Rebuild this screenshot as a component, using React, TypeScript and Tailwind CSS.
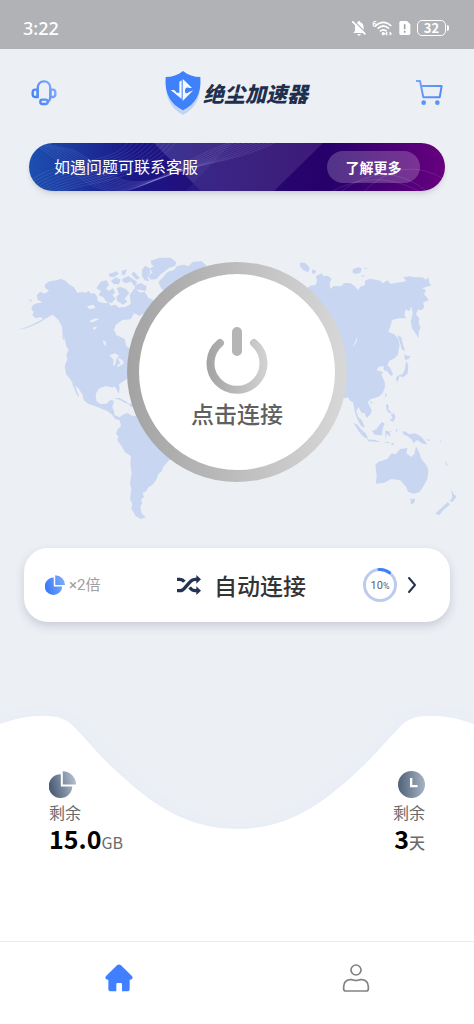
function ShieldLogo() {
  return (
    <svg className="h-11 w-[38px]" viewBox="0 0 114 132" aria-hidden="true">
      <path d="M57 12 C72 24 90 30 108 30 C112 80 94 112 57 132 C20 112 2 80 6 30 C24 30 42 24 57 12Z" fill="#c3d4f3" />
      <path d="M57 0 C72 12 90 18 109 18 C113 68 94 100 57 118 C20 100 1 68 5 18 C24 18 42 12 57 0Z" fill="#3f80fb" />
      <path
        d="M46 32 L53 28 V84 L20 57 H31 L38 65 H46Z M56 24 L63 30 L84 51 H75 C66 47 63 54 63 60 C63 66 68 70 74 64 L88 58 L56 90Z"
        fill="#f4f8ff"
      />
    </svg>
  )
}

function HeadsetIcon() {
  return (
    <svg className="size-[26px]" viewBox="0 0 78 78" fill="none" stroke="url(#headset)" strokeWidth="7" aria-hidden="true">
      <defs>
        <linearGradient id="headset" gradientUnits="userSpaceOnUse" x1="0" y1="60" x2="78" y2="20">
          <stop stopColor="#3c7cf8" />
          <stop offset="1" stopColor="#86aefa" />
        </linearGradient>
      </defs>
      <path d="M20 50 V25 C20 12 28 4 39 4 C50 4 58 12 58 25 V50" />
      <path d="M20 29 H12 Q5 29 5 37 V43 Q5 51 12 51 H20Z M58 29 H66 Q73 29 73 37 V43 Q73 51 66 51 H58Z" />
      <path d="M58 49 Q58 65 47 66" />
      <rect x="28" y="59" width="22" height="13" rx="6" />
    </svg>
  )
}

function CartIcon() {
  return (
    <svg className="size-7" viewBox="0 0 84 84" fill="none" stroke="url(#cart)" strokeWidth="6" aria-hidden="true">
      <defs>
        <linearGradient id="cart" gradientUnits="userSpaceOnUse" x1="0" y1="0" x2="84" y2="70">
          <stop stopColor="#7aa6fa" />
          <stop offset="1" stopColor="#4a84f7" />
        </linearGradient>
      </defs>
      <path d="M3 6 H15 L25 55 H74 L80 21 H18" strokeLinejoin="round" />
      <circle cx="26" cy="71" r="7" fill="#5e92f8" stroke="none" />
      <circle cx="67" cy="71" r="7" fill="#5e92f8" stroke="none" />
    </svg>
  )
}

function StatusIcons() {
  return (
    <div className="flex items-center gap-1.5 text-white">
      <svg className="h-4 w-3.5" viewBox="0 0 42 48" aria-hidden="true">
        <path d="M21 3 Q25 3 25 7 Q35 11 35 23 V33 L40 39 H4 L9 33 V20 Q10 10 17 7 Q17 3 21 3Z M16 42 H27 Q25 47 21 47 Q17 47 16 42Z" fill="currentColor" />
        <path d="M4 1 L44 41" stroke="#b1b2b6" strokeWidth="4" />
        <path d="M1 4 L40 43" stroke="currentColor" strokeWidth="5" />
      </svg>
      <div className="flex">
        <span className="-mr-1 text-[8px] leading-[8px] font-bold">6</span>
        <svg className="h-4 w-5" viewBox="0 0 60 48" fill="none" stroke="currentColor" strokeWidth="5" aria-hidden="true">
          <path d="M7 18 Q31 -4 55 18 M14 26 Q31 10 48 26 M21 34 Q31 25 41 34" />
          <circle cx="31" cy="41" r="5" fill="currentColor" stroke="none" />
          <path d="M43 37 L39 41 L43 45 M50 37 L54 41 L50 45" strokeWidth="4" />
        </svg>
      </div>
      <svg className="h-4 w-3" viewBox="0 0 36 48" aria-hidden="true">
        <path d="M5 3 H24 L34 13 V40 Q34 45 29 45 H5 Q1 45 1 40 V8 Q1 3 5 3Z" fill="currentColor" />
        <path d="M17 13 V28 M17 32 V38" stroke="#a4a5a9" strokeWidth="5" />
      </svg>
      <div className="flex items-center">
        <span className="flex h-4 w-[29px] items-center justify-center rounded-[5px] border border-white text-[13px] leading-none font-bold">
          32
        </span>
        <span className="ml-px h-1.5 w-0.5 rounded-r bg-white" />
      </div>
    </div>
  )
}

function WorldMap() {
  return (
    <svg className="col-start-1 row-start-1 h-auto w-full" viewBox="0 0 1422 870" fill="#c8d6f2" aria-hidden="true">
      <path d="M50 270 L78 262 L108 248 L130 236 L120 231 L108 235 L97 226 L101 216 L94 208 L98 196 L112 189 L127 188 L112 178 L111 164 L121 155 L134 161 L147 152 L134 142 L135 133 L149 124 L171 121 L182 116 L196 122 L206 132 L222 142 L232 158 L247 156 L258 158 L265 152 L274 161 L283 159 L291 169 L293 184 L312 190 L325 187 L332 197 L347 194 L356 203 L375 201 L389 194 L404 168 L414 160 L426 170 L440 165 L450 190 L420 228 L402 220 L392 238 L367 240 L347 255 L342 269 L349 285 L374 297 L379 318 L391 327 L440 340 L410 405 L380 418 L357 433 L359 446 L356 462 L346 441 L334 442 L318 438 L296 446 L287 463 L289 482 L300 492 L320 491 L331 480 L342 482 L337 502 L342 512 L344 526 L360 532 L370 523 L383 519 L396 527 L411 527 L440 565 L525 655 L507 661 L490 680 L485 694 L475 702 L469 719 L457 735 L445 742 L439 754 L428 758 L432 771 L423 779 L427 790 L421 800 L425 821 L438 832 L423 837 L407 829 L399 814 L394 806 L397 791 L390 778 L394 748 L390 730 L395 700 L391 675 L393 649 L374 635 L366 620 L352 601 L355 589 L348 581 L353 568 L363 559 L359 541 L345 537 L338 526 L323 514 L301 505 L286 499 L266 492 L251 481 L248 464 L235 445 L222 435 L212 419 L198 402 L194 378 L202 359 L199 343 L206 331 L199 318 L194 298 L188 286 L186 260 L175 239 L158 224 L140 234 L112 251 L78 265Z" />
      <path d="M289 145 L302 125 L320 121 L327 135 L318 145 L327 153 L339 144 L345 158 L337 165 L347 176 L334 190 L318 184 L310 172 L296 166 L303 153Z M326 102 L350 94 L357 102 L340 112 L329 110Z M365 92 L381 88 L375 104 L366 105Z M333 122 L348 112 L362 119 L357 133 L341 132Z M367 116 L385 108 L398 117 L412 126 L403 139 L393 124 L380 130 L367 125Z M350 145 L361 140 L377 147 L388 158 L374 176 L382 185 L369 194 L352 183 L349 171 L357 162Z M389 166 L403 145 L421 158 L434 155 L445 173 L460 180 L451 208 L433 222 L415 226 L416 210 L401 205 L406 193 L392 186Z M401 94 L410 104 L420 114 L409 119 L394 103Z M405 136 L422 129 L440 139 L437 153 L419 150 L405 148Z M426 90 L435 77 L448 84 L451 98 L443 109 L447 124 L434 121 L426 109Z M452 62 L480 53 L512 53 L529 67 L525 78 L507 84 L492 96 L480 105 L470 117 L452 119 L444 107 L458 97 L448 86 L462 79 L454 73Z M475 126 L490 111 L503 95 L520 91 L532 78 L549 74 L566 78 L579 65 L605 64 L620 77 L560 105 L560 140 L488 150 L481 140Z" />
      <path d="M86 177 L96 181 L93 186Z M185 287 L193 294 L191 301Z M215 428 L224 434 L230 451 L238 471 L231 465 L223 446Z M341 475 L358 474 L374 482 L389 492 L376 489 L360 480Z M386 493 L400 490 L406 500 L391 500Z" />
      {/* lakes */}
      <path d="M261 199 L280 194 L287 203 L268 208Z M267 244 L285 235 L298 237 L278 247Z M277 264 L292 259 L284 270Z M309 300 L317 305 L318 319 L311 312Z M328 346 L345 340 L358 348 L350 355 L345 375 L339 378 L341 359Z M352 354 L367 359 L372 370 L357 380 L350 378 L361 370Z" fill="#ecf0f5" />
      <g transform="translate(702 0)">
        <path d="M220 145 L229 137 L244 135 L249 124 L246 108 L263 100 L269 108 L281 107 L293 116 L287 130 L289 147 L299 138 L321 139 L331 129 L348 129 L361 137 L373 151 L379 140 L393 135 L393 122 L407 116 L425 119 L439 122 L447 130 L461 121 L469 132 L489 128 L506 126 L517 123 L508 112 L525 109 L545 112 L566 112 L575 119 L583 112 L586 129 L592 136 L574 142 L564 144 L576 151 L570 162 L577 170 L584 180 L567 188 L571 200 L564 210 L552 209 L546 222 L556 237 L554 251 L560 261 L554 278 L554 295 L544 279 L534 265 L530 245 L536 220 L532 199 L526 214 L515 208 L511 225 L516 235 L494 235 L474 240 L470 257 L463 276 L480 282 L492 295 L497 315 L491 346 L478 357 L466 362 L460 376 L468 383 L477 402 L471 409 L459 393 L449 391 L449 378 L434 380 L428 391 L447 396 L442 404 L452 425 L453 441 L446 459 L434 470 L409 478 L401 487 L413 511 L410 523 L398 533 L391 519 L382 518 L374 501 L367 512 L372 530 L383 540 L393 563 L381 558 L370 537 L363 517 L357 487 L348 482 L342 472 L332 475 L250 410Z" />
        <path d="M197 68 L213 68 L221 76 L228 85 L222 97 L208 91 L199 80Z M235 88 L247 93 L241 103 L233 98Z M357 88 L371 82 L383 85 L380 98 L364 102 L355 97Z M389 83 L401 84 L396 88Z M381 104 L395 109 L385 110Z" />
        <path d="M491 285 L502 292 L507 314 L514 333 L504 329 L498 309Z M512 341 L519 348 L530 348 L523 358 L512 359Z M516 363 L523 374 L521 401 L508 411 L496 409 L491 426 L485 418 L490 408 L506 402 L513 387Z M453 460 L459 462 L455 474Z M407 483 L416 486 L412 492Z M456 491 L464 496 L463 509 L474 518 L464 519 L457 507Z M470 523 L481 520 L484 535 L478 545 L466 541 L476 534Z M358 548 L371 555 L381 568 L395 580 L403 597 L390 592 L375 575Z M399 598 L424 600 L440 606 L402 604Z M414 573 L427 568 L436 555 L445 545 L452 551 L447 562 L444 586 L422 584Z M454 571 L466 575 L477 571 L466 578 L471 590 L459 582 L454 596Z M485 566 L491 570 L487 578Z M447 605 L467 606 L463 610Z M471 610 L483 609 L475 616Z M503 574 L516 575 L525 583 L543 580 L562 590 L580 613 L566 611 L549 600 L538 610 L534 600 L521 589 L511 585Z M579 597 L591 600 L582 603Z M617 600 L624 606 L620 607Z M633 663 L642 676 L637 676Z" />
        <path d="M424 674 L434 665 L460 657 L473 640 L485 643 L498 627 L520 624 L517 640 L532 651 L541 642 L546 619 L556 638 L561 655 L577 676 L583 689 L580 716 L570 736 L557 756 L538 761 L522 755 L515 738 L509 733 L499 721 L472 717 L451 728 L425 731 L428 709Z M529 776 L544 777 L540 789 L531 793Z M652 748 L660 764 L668 769 L656 785 L647 784 L655 773Z M641 786 L648 794 L629 809 L615 826 L604 820 L620 806Z" />
        <path d="M366 288 Q370 301 354 320 Q367 312 369 300Z" fill="#ecf0f5" />
      </g>
    </svg>
  )
}

function PieIcon({ from, to, id, className }: { from: string; to: string; id: string; className: string }) {
  return (
    <svg className={className} viewBox="0 0 80 80" fill={`url(#${id})`} aria-hidden="true">
      <defs>
        <linearGradient id={id} gradientUnits="userSpaceOnUse" x1="5" y1="50" x2="80" y2="30">
          <stop stopColor={from} />
          <stop offset="1" stopColor={to} />
        </linearGradient>
      </defs>
      <path d="M35 10 V46 H69 A35 35 0 1 1 35 10Z" />
      <path d="M41 1 A39 39 0 0 1 80 40 H41Z" />
    </svg>
  )
}

function Banner() {
  const waves = [0, 1, 2, 3, 4, 5, 6, 7, 8, 9]

  return (
    <section className="mx-[29px] mt-1.5 grid overflow-hidden rounded-full shadow-md">
      <svg className="col-start-1 row-start-1 h-12 w-full" viewBox="0 0 1248 144" preserveAspectRatio="none" aria-hidden="true">
        <defs>
          <linearGradient id="banner">
            <stop stopColor="#1c50b0" />
            <stop offset="0.25" stopColor="#1b1787" />
            <stop offset="0.5" stopColor="#260a73" />
            <stop offset="0.72" stopColor="#27006a" />
            <stop offset="1" stopColor="#68007f" />
          </linearGradient>
        </defs>
        <rect width="1248" height="144" fill="url(#banner)" />
        <path d="M375 0 H882 L735 144 H515Z" fill="#fff" fillOpacity="0.1" />
        <path d="M610 0 L470 144 H515 L375 0Z" fill="#fff" fillOpacity="0.04" />
        <g fill="none" stroke="#b9bfff" strokeOpacity="0.22" strokeWidth="2">
          {waves.map((n) => (
            <path key={n} d={`M${n * 16 - 20} ${-10 + n * 3} C${90 + n * 16} ${20 + n * 5} ${180 + n * 8} ${190 - n * 4} ${320 + n * 10} ${135 - n * 4} S${500 + n * 12} ${20 + n * 5} ${670 + n * 12} -20`} />
          ))}
          {waves.map((n) => (
            <path key={n} d={`M${n * 14 - 40} 150 C${80 + n * 12} ${20 + n * 10} ${250 + n * 12} ${90 + n * 3} ${310 + n * 16} -20`} />
          ))}
          <path d="M900 150 Q1040 70 1180 150 M930 150 Q1070 40 1200 150 M1000 150 Q1120 30 1248 110" />
        </g>
      </svg>
      <div className="col-start-1 row-start-1 flex items-center justify-between px-[25px]">
        <p className="pb-0.5 text-base text-white">如遇问题可联系客服</p>
        <button className="h-8 w-[93px] rounded-full bg-white/20 text-sm font-bold text-white">了解更多</button>
      </div>
    </section>
  )
}

function ConnectButton() {
  return (
    <button className="col-start-1 row-start-1 mt-[22px] size-[220px] justify-self-center rounded-full bg-linear-to-r from-[#a3a3a3] to-[#d8d8d8] p-3">
      <span className="flex size-full flex-col items-center rounded-full bg-white pt-[52px]">
        <svg className="h-[68px] w-16" viewBox="0 0 64 68" fill="none" strokeLinecap="round" aria-hidden="true">
          <defs>
            <linearGradient id="power" gradientUnits="userSpaceOnUse" x1="2" y1="0" x2="62" y2="0">
              <stop stopColor="#a3a3a3" />
              <stop offset="1" stopColor="#d2d2d2" />
            </linearGradient>
          </defs>
          <path d="M15 17 A26.5 26.5 0 1 0 49 17" stroke="url(#power)" strokeWidth="8" />
          <rect x="27" y="1" width="10" height="29" rx="5" fill="#b5b5b5" />
        </svg>
        <span className="text-[23px] leading-[38px] font-medium text-[#606060]">点击连接</span>
      </span>
    </button>
  )
}

function NodeCard() {
  return (
    <section className="mx-6 mt-[18px] grid h-[74px] grid-cols-[1fr_auto_1fr] items-center rounded-3xl bg-white px-5 shadow-[0_4px_10px_rgba(60,60,90,0.2)]">
      <div className="flex items-center gap-1 pl-px font-['Roboto','Noto_Sans_CJK_SC',sans-serif] text-[15px] text-[#a0a0a0]">
        <PieIcon className="size-5" id="rate" from="#3c7cf8" to="#7fabfc" />
        ×2倍
      </div>
      <div className="flex items-center gap-3 pl-2 text-[23px] font-medium text-[#333]">
        <svg className="h-5 w-[26px]" viewBox="0 0 78 60" fill="none" stroke="#243350" strokeWidth="10" aria-hidden="true">
          <path d="M3 13 H12 Q20 13 25 20 M3 47 H12 Q20 47 27 38 L43 20 Q49 13 57 13 H64 M41 37 Q48 47 57 47 H64" />
          <path d="M61 0 L75 13 L61 26Z M61 34 L75 47 L61 60Z" fill="#243350" stroke="none" />
        </svg>
        自动连接
      </div>
      <div className="flex items-center justify-end gap-0.5 pr-1.5">
        <div className="grid place-items-center">
          <svg className="col-start-1 row-start-1 size-9" viewBox="0 0 36 36" fill="none" strokeWidth="3" aria-hidden="true">
            <circle cx="18" cy="18" r="15.5" stroke="#bccbee" />
            <path d="M17 2.5 A15.5 15.5 0 0 1 27.5 5.8" stroke="#3f80f5" strokeLinecap="round" />
          </svg>
          <span className="col-start-1 row-start-1 font-['Roboto',sans-serif] text-[11px] leading-none text-[#606060]">
            10<span className="text-[9px]">%</span>
          </span>
        </div>
        <button aria-label="选择线路">
          <svg className="size-6" viewBox="0 0 24 24" fill="none" stroke="#243350" strokeWidth="2" strokeLinecap="round" strokeLinejoin="round" aria-hidden="true">
            <path d="M9 5 L15 12 L9 19" />
          </svg>
        </button>
      </div>
    </section>
  )
}

function Remaining() {
  return (
    <section className="mt-auto grid">
      <svg className="col-start-1 row-start-1 h-[226px] w-full" viewBox="0 0 1422 678" preserveAspectRatio="none" overflow="visible" aria-hidden="true">
        <defs>
          <filter id="soft" x="-10%" y="-20%" width="120%" height="140%">
            <feGaussianBlur stdDeviation="24" />
          </filter>
          <path
            id="wave"
            d="M0 27 Q65 2 130 2 Q178 1 205 20 C230 38 285 108 340 160 C450 264 555 342 711 342 C867 342 972 264 1082 160 C1137 108 1192 38 1217 20 Q1244 1 1292 2 Q1357 2 1422 27 V678 H0Z"
          />
        </defs>
        <use href="#wave" fill="#e6eaf6" filter="url(#soft)" />
        <use href="#wave" fill="#fff" />
      </svg>
      <div className="col-start-1 row-start-1 flex justify-between px-[49px] pt-14 text-base text-[#6b6b6b]">
        <div>
          <PieIcon className="size-[27px]" id="traffic" from="#4c5d77" to="#b2bfcd" />
          <p className="pt-0.5 leading-6">剩余</p>
          <p className="flex items-baseline leading-none">
            <strong className="text-[25px] leading-7 font-bold text-black">15.0</strong>GB
          </p>
        </div>
        <div className="flex flex-col items-end">
          <svg className="size-[27px]" viewBox="0 0 80 80" aria-hidden="true">
            <defs>
              <linearGradient id="clock">
                <stop stopColor="#4f607a" />
                <stop offset="1" stopColor="#a7b4c3" />
              </linearGradient>
            </defs>
            <circle cx="40" cy="40" r="40" fill="url(#clock)" />
            <path d="M39 21 V45 H58" fill="none" stroke="#fff" strokeWidth="7" />
          </svg>
          <p className="pt-0.5 leading-6">剩余</p>
          <p className="flex items-baseline leading-none font-medium">
            <strong className="text-[25px] leading-7 font-bold text-black">3</strong>天
          </p>
        </div>
      </div>
    </section>
  )
}

function TabBar() {
  return (
    <nav className="grid h-[83px] grid-cols-2 border-t border-[#ebebeb] bg-white pt-[22px]">
      <a href="#home" aria-label="首页" className="flex justify-center">
        <svg className="size-7" viewBox="0 0 84 84" fill="#4080ff" aria-hidden="true">
          <path d="M36 4 Q42 -1 48 4 L80 35 Q84 39 82 44 Q80 47 74 47 V74 Q74 82 66 82 H51 V60 Q51 57 48 57 H37 Q34 57 34 60 V82 H18 Q10 82 10 74 V47 Q4 47 2 44 Q0 39 4 35Z" />
        </svg>
      </a>
      <a href="#me" aria-label="我的" className="flex justify-center">
        <svg className="size-7" viewBox="0 0 84 84" fill="none" stroke="#808285" strokeWidth="5" aria-hidden="true">
          <circle cx="42" cy="18" r="15" />
          <path d="M24 47 Q31 46 34 48 Q42 51 50 48 Q53 46 60 47 Q78 49 79 68 V75 Q79 81 73 81 H11 Q5 81 5 75 V68 Q6 49 24 47Z" />
        </svg>
      </a>
    </nav>
  )
}

export default function App() {
  return (
    <main className="flex min-h-screen flex-col bg-[#ecf0f5] font-['Noto_Sans_CJK_SC',sans-serif]">
      <div className="flex h-[49px] items-center justify-between bg-[#b1b2b6] pt-1.5 pr-[25px] pl-[23px]">
        <span className="font-['Noto_Sans',sans-serif] text-lg font-medium text-white">3:22</span>
        <StatusIcons />
      </div>
      <header className="flex h-[88px] items-center justify-between px-[31px]">
        <button aria-label="客服">
          <HeadsetIcon />
        </button>
        <h1 className="flex items-center gap-px text-[21px] leading-none font-black text-[#1f2f4d] italic">
          <ShieldLogo />
          绝尘加速器
        </h1>
        <button aria-label="购物车">
          <CartIcon />
        </button>
      </header>
      <Banner />
      <div className="mt-[49px] grid">
        <WorldMap />
        <ConnectButton />
      </div>
      <NodeCard />
      <Remaining />
      <TabBar />
    </main>
  )
}
